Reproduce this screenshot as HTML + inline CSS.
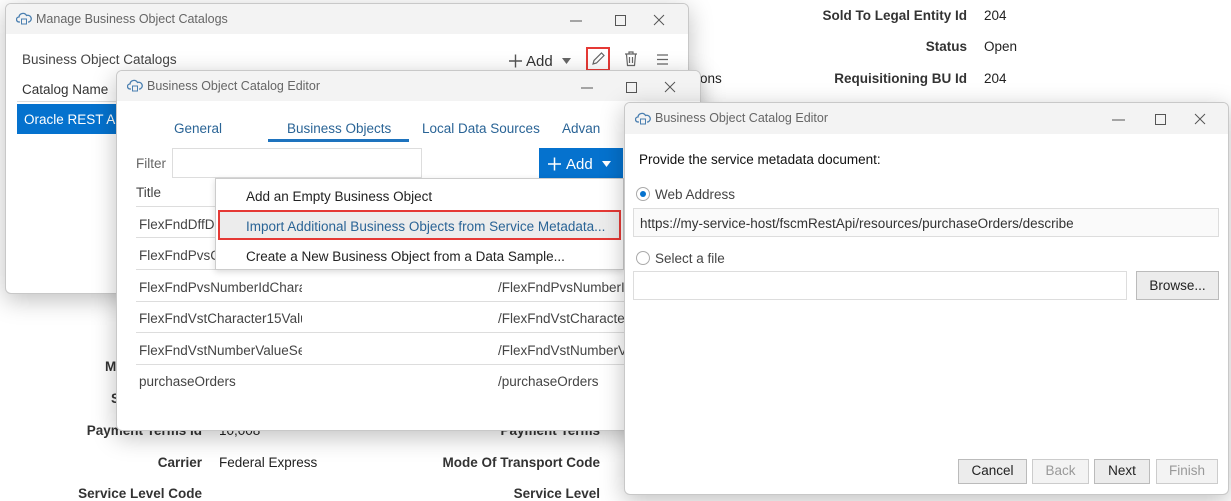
<!DOCTYPE html>
<html><head><meta charset="utf-8"><style>
*{box-sizing:border-box;margin:0;padding:0}
body{width:1231px;height:497px;overflow:hidden;background:#fff;position:relative;font-family:"Liberation Sans",sans-serif;font-size:13.5px;color:#222}
.a{position:absolute;white-space:nowrap}
.lb{font-weight:bold;color:#333;text-align:right}
.win{position:absolute;background:#fff;border:1px solid #c8c8c8;border-radius:6px;box-shadow:0 6px 24px rgba(0,0,0,.25);overflow:hidden}
.tb{position:absolute;left:0;right:0;top:0;height:30px;background:#f3f3f3}
.tt{position:absolute;left:30px;top:8px;color:#666;font-size:12.5px}
.ic{position:absolute;left:10px;top:7px}
.ctl{position:absolute;top:6px}
.blue{color:#2a6496}
.line{position:absolute;height:1px;background:#ddd}
.btn{position:absolute;border:1px solid #bbb;background:#ececec;text-align:center;line-height:22px;font-size:13.5px}
.c1{overflow:hidden;width:163px}
</style></head><body>
<div class="a lb" style="right:264px;top:8px">Sold To Legal Entity Id</div><div class="a" style="left:984px;top:8px">204</div>
<div class="a lb" style="right:264px;top:39px">Status</div><div class="a" style="left:984px;top:39px">Open</div>
<div class="a lb" style="right:264px;top:71px">Requisitioning BU Id</div><div class="a" style="left:984px;top:71px">204</div>
<div class="a" style="left:700px;top:71px">ons</div>
<div class="a lb" style="left:105px;top:359px">M</div>
<div class="a lb" style="left:111px;top:391px">S</div>
<div class="a lb" style="right:1029px;top:423px">Payment Terms Id</div><div class="a" style="left:219px;top:423px">10,008</div>
<div class="a lb" style="right:631px;top:423px">Payment Terms</div>
<div class="a lb" style="right:1029px;top:455px">Carrier</div><div class="a" style="left:219px;top:455px">Federal Express</div>
<div class="a lb" style="right:631px;top:455px">Mode Of Transport Code</div>
<div class="a lb" style="right:1029px;top:486px">Service Level Code</div>
<div class="a lb" style="right:631px;top:486px">Service Level</div>

<!-- window 1 -->
<div class="win" style="left:5px;top:3px;width:684px;height:291px">
 <div class="tb"></div>
 <svg class="ic" width="16" height="14" viewBox="0 0 16 14"><path d="M4 11H3a2.5 2.5 0 0 1 0-5 4 4 0 0 1 7.5-1.5A3 3 0 0 1 13 11h-1" fill="none" stroke="#4a7fb0" stroke-width="1.3"/><rect x="5.5" y="8" width="5" height="5" fill="none" stroke="#4a7fb0"/></svg>
 <div class="tt">Manage Business Object Catalogs</div>
 <svg class="ctl" style="left:560px;top:8px" width="100" height="16"><path d="M4 9h12" stroke="#555"/><rect x="49.5" y="3.5" width="10" height="10" fill="none" stroke="#555"/><path d="M88 3l10 10M98 3L88 13" stroke="#555"/></svg>
 <div class="a" style="left:16px;top:48px;color:#444">Business Object Catalogs</div>
 <svg class="a" style="left:500px;top:47px" width="72" height="20"><path d="M3 10h13M9.5 3.5v13" stroke="#555" stroke-width="1.4"/><text x="20" y="15" font-family="Liberation Sans" font-size="15" fill="#333">Add</text><path d="M56 7h9l-4.5 6z" fill="#666"/></svg>
 <div class="a" style="left:580px;top:43px;width:24px;height:24px;border:2px solid #e53935"></div>
 <svg class="a" style="left:584px;top:47px" width="16" height="16"><path d="M3 13l1-3.5 7.5-7.5 2.5 2.5-7.5 7.5z" fill="none" stroke="#666" stroke-width="1.2"/></svg>
 <svg class="a" style="left:617px;top:46px" width="16" height="18"><path d="M2 4h12M6 4V2h4v2M3.5 4.5l1 11h7l1-11M6.5 7v6M9.5 7v6" fill="none" stroke="#666" stroke-width="1.2"/></svg>
 <svg class="a" style="left:650px;top:49px" width="14" height="14"><path d="M1 2h11M1 6.5h11M1 11h11" stroke="#666" stroke-width="1.3"/></svg>
 <div class="a" style="left:16px;top:78px;color:#333">Catalog Name</div>
 <div class="line" style="left:11px;right:11px;top:97px"></div>
 <div class="a" style="left:11px;top:100px;width:200px;height:30px;background:#0572ce;color:#fff;padding:8px 0 0 7px">Oracle REST AP</div>
</div>

<!-- window 2 -->
<div class="win" style="left:116px;top:70px;width:585px;height:361px">
 <div class="tb"></div>
 <svg class="ic" width="16" height="14" viewBox="0 0 16 14"><path d="M4 11H3a2.5 2.5 0 0 1 0-5 4 4 0 0 1 7.5-1.5A3 3 0 0 1 13 11h-1" fill="none" stroke="#4a7fb0" stroke-width="1.3"/><rect x="5.5" y="8" width="5" height="5" fill="none" stroke="#4a7fb0"/></svg>
 <div class="tt">Business Object Catalog Editor</div>
 <svg class="ctl" style="left:460px;top:8px" width="100" height="16"><path d="M4 9h12" stroke="#555"/><rect x="49.5" y="3.5" width="10" height="10" fill="none" stroke="#555"/><path d="M88 3l10 10M98 3L88 13" stroke="#555"/></svg>
 <div class="a blue" style="left:57px;top:50px">General</div>
 <div class="a blue" style="left:170px;top:50px">Business Objects</div>
 <div class="a" style="left:151px;top:68px;width:141px;height:3px;background:#1e73be"></div>
 <div class="a blue" style="left:305px;top:50px">Local Data Sources</div>
 <div class="a blue" style="left:445px;top:50px">Advan</div>
 <div class="a" style="left:19px;top:85px;color:#666">Filter</div>
 <div class="a" style="left:55px;top:77px;width:250px;height:30px;border:1px solid #ddd"></div>
 <div class="a" style="left:422px;top:77px;width:84px;height:30px;background:#0572ce"></div>
 <svg class="a" style="left:428px;top:83px" width="76" height="20"><path d="M3 10h13M9.5 3.5v13" stroke="#fff" stroke-width="1.5"/><text x="21" y="15" font-family="Liberation Sans" font-size="15" fill="#fff">Add</text><path d="M57 7h9l-4.5 6z" fill="#fff"/></svg>
 <div class="a" style="left:19px;top:114px;color:#444">Title</div>
 <div class="line" style="left:19px;right:0;top:135px"></div>
 <div class="a c1" style="left:22px;top:146px;color:#444">FlexFndDffD</div>
 <div class="line" style="left:19px;right:0;top:166px"></div>
 <div class="a c1" style="left:22px;top:177px;color:#444">FlexFndPvsC</div>
 <div class="line" style="left:19px;right:0;top:198px"></div>
 <div class="a c1" style="left:22px;top:209px;color:#444">FlexFndPvsNumberIdCharacter</div><div class="a" style="left:381px;top:209px;color:#444">/FlexFndPvsNumberI</div>
 <div class="line" style="left:19px;right:0;top:230px"></div>
 <div class="a c1" style="left:22px;top:240px;color:#444">FlexFndVstCharacter15Values</div><div class="a" style="left:381px;top:240px;color:#444">/FlexFndVstCharacte</div>
 <div class="line" style="left:19px;right:0;top:261px"></div>
 <div class="a c1" style="left:22px;top:272px;color:#444">FlexFndVstNumberValueSets</div><div class="a" style="left:381px;top:272px;color:#444">/FlexFndVstNumberV</div>
 <div class="line" style="left:19px;right:0;top:293px"></div>
 <div class="a" style="left:22px;top:303px;color:#444">purchaseOrders</div><div class="a" style="left:381px;top:303px;color:#444">/purchaseOrders</div>
 <div class="a" style="left:98px;top:107px;width:409px;height:92px;background:#fff;border:1px solid #ccc;box-shadow:0 2px 6px rgba(0,0,0,.15)">
  <div class="a" style="left:30px;top:10px;color:#222">Add an Empty Business Object</div>
  <div class="a" style="left:2px;top:31px;width:403px;height:30px;background:#ececec;border:2px solid #e53935"></div>
  <div class="a" style="left:30px;top:40px;color:#2a6496">Import Additional Business Objects from Service Metadata...</div>
  <div class="a" style="left:30px;top:70px;color:#222">Create a New Business Object from a Data Sample...</div>
 </div>
</div>

<!-- window 3 -->
<div class="win" style="left:624px;top:102px;width:605px;height:393px">
 <div class="tb" style="height:31px"></div>
 <svg class="ic" width="16" height="14" viewBox="0 0 16 14" style="top:8px"><path d="M4 11H3a2.5 2.5 0 0 1 0-5 4 4 0 0 1 7.5-1.5A3 3 0 0 1 13 11h-1" fill="none" stroke="#4a7fb0" stroke-width="1.3"/><rect x="5.5" y="8" width="5" height="5" fill="none" stroke="#4a7fb0"/></svg>
 <div class="tt">Business Object Catalog Editor</div>
 <svg class="ctl" style="left:484px;top:8px" width="100" height="16"><path d="M3 9h13" stroke="#555"/><rect x="46.5" y="3.5" width="10" height="10" fill="none" stroke="#555"/><path d="M86 3l10 10M96 3L86 13" stroke="#555"/></svg>
 <div class="a" style="left:14px;top:49px;color:#111">Provide the service metadata document:</div>
 <div class="a" style="left:11px;top:84px;width:14px;height:14px;border-radius:50%;border:1px solid #aaa;background:#fff"><div style="position:absolute;left:3px;top:3px;width:6px;height:6px;border-radius:50%;background:#0572ce"></div></div>
 <div class="a" style="left:30px;top:84px;color:#444">Web Address</div>
 <div class="a" style="left:8px;top:105px;width:586px;height:29px;border:1px solid #ddd;background:#fafafa;padding:7px 0 0 6px;color:#333">https://my-service-host/fscmRestApi/resources/purchaseOrders/describe</div>
 <div class="a" style="left:11px;top:148px;width:14px;height:14px;border-radius:50%;border:1px solid #aaa"></div>
 <div class="a" style="left:30px;top:148px;color:#444">Select a file</div>
 <div class="a" style="left:8px;top:168px;width:494px;height:29px;border:1px solid #ddd"></div>
 <div class="btn" style="left:511px;top:168px;width:83px;height:29px;line-height:27px">Browse...</div>
 <div class="btn" style="left:333px;top:356px;width:69px;height:25px">Cancel</div>
 <div class="btn" style="left:407px;top:356px;width:57px;height:25px;color:#999;background:#f3f3f3;border-color:#ccc">Back</div>
 <div class="btn" style="left:469px;top:356px;width:56px;height:25px">Next</div>
 <div class="btn" style="left:531px;top:356px;width:62px;height:25px;color:#999;background:#f3f3f3;border-color:#ccc">Finish</div>
</div>
</body></html>
